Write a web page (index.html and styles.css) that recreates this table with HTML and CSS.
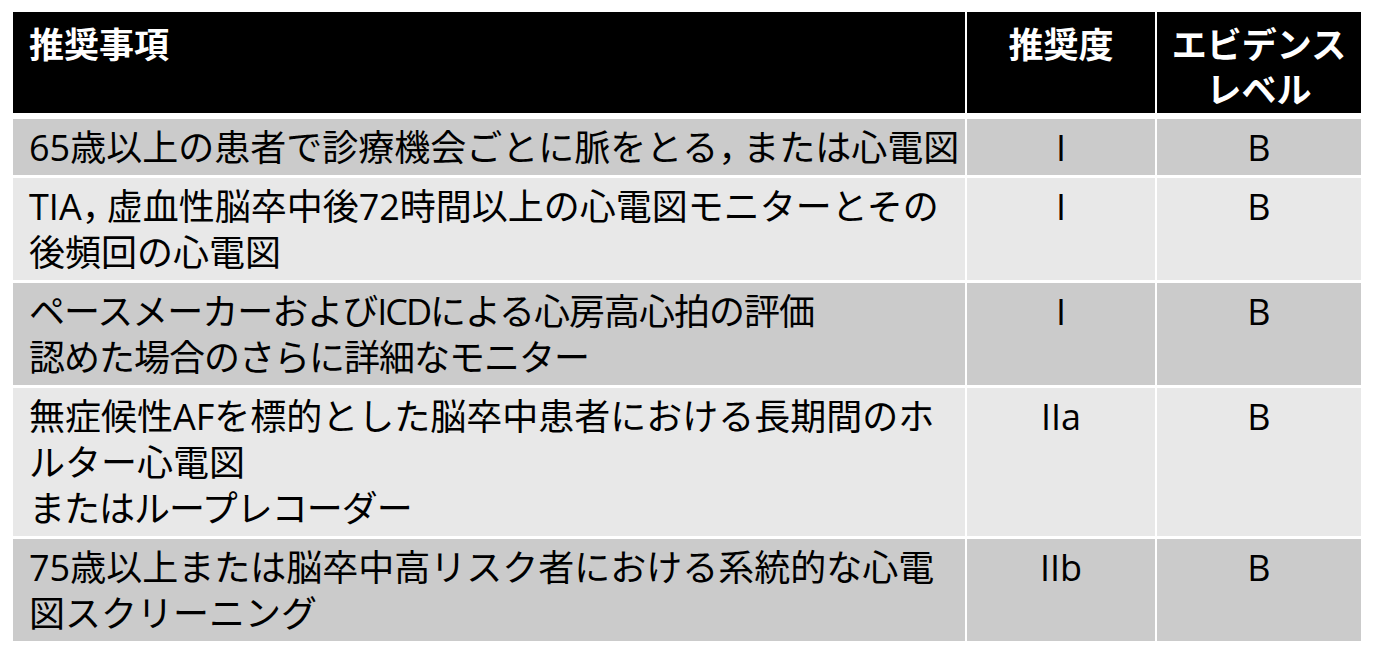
FILE: index.html
```html
<!DOCTYPE html>
<html lang="ja">
<head>
<meta charset="utf-8">
<title>推奨事項</title>
<link rel="stylesheet" href="styles.css">
</head>
<body>
<div class="page">
  <table class="rec">
    <colgroup>
      <col class="c-item">
      <col class="c-grade">
      <col class="c-level">
    </colgroup>
    <thead>
      <tr>
        <th class="item">推奨事項</th>
        <th class="mid">推奨度</th>
        <th class="mid last">エビデンス<br>レベル</th>
      </tr>
    </thead>
    <tbody>
      <tr class="dark">
        <td class="item">65歳以上の患者で診療機会ごとに脈をとる<span class="comma">，</span>または心電図</td>
        <td class="mid">I</td>
        <td class="mid last">B</td>
      </tr>
      <tr class="light">
        <td class="item">TIA<span class="comma">，</span>虚血性脳卒中後72時間以上の心電図モニターとその<br>後頻回の心電図</td>
        <td class="mid">I</td>
        <td class="mid last">B</td>
      </tr>
      <tr class="dark">
        <td class="item tight">ペースメーカーおよび<span class="narrow">ICD</span>による心房高心拍の評価<br>認めた場合のさらに詳細なモニター</td>
        <td class="mid">I</td>
        <td class="mid last">B</td>
      </tr>
      <tr class="light">
        <td class="item">無症候性AFを標的とした脳卒中患者における長期間のホ<br>ルター心電図<br><span class="tight">またはループレコーダー</span></td>
        <td class="mid">IIa</td>
        <td class="mid last">B</td>
      </tr>
      <tr class="dark">
        <td class="item">75歳以上または脳卒中高リスク者における系統的な心電<br>図スクリーニング</td>
        <td class="mid">IIb</td>
        <td class="mid last">B</td>
      </tr>
    </tbody>
  </table>
</div>
</body>
</html>
```

FILE: styles.css
```css
html, body {
  margin: 0;
  padding: 0;
  background: #ffffff;
}

.page {
  padding: 12px 0 0 13px;
  font-family: "Open Sans", "Noto Sans CJK JP", sans-serif;
  color: #000;
}

.rec {
  border-collapse: separate;
  border-spacing: 0;
  table-layout: fixed;
  width: 1348px;
}

.c-item { width: 954px; }
.c-grade { width: 190px; }
.c-level { width: 204px; }

.rec th,
.rec td {
  vertical-align: top;
  white-space: nowrap;
  border-right: 2px solid #ffffff;
  border-bottom: 3px solid #ffffff;
}

.rec .last {
  border-right: none;
}

.rec th {
  background: #000;
  color: #fff;
  font-weight: bold;
  font-size: 35px;
  line-height: 45px;
  padding: 8px 0 3px;
  border-bottom-width: 6px;
  font-family: "Noto Sans CJK JP", sans-serif;
}

.rec td {
  font-size: 36px;
  line-height: 46px;
  padding: 6px 0 4px;
}

.rec .item {
  text-align: left;
  padding-left: 16px;
}

.rec .mid {
  text-align: center;
}

.comma {
  letter-spacing: -11px;
}

.narrow {
  letter-spacing: -2px;
}

.tight {
  letter-spacing: -1px;
}

.dark td { background: #cbcbcb; }
.light td { background: #e8e8e8; }
```
